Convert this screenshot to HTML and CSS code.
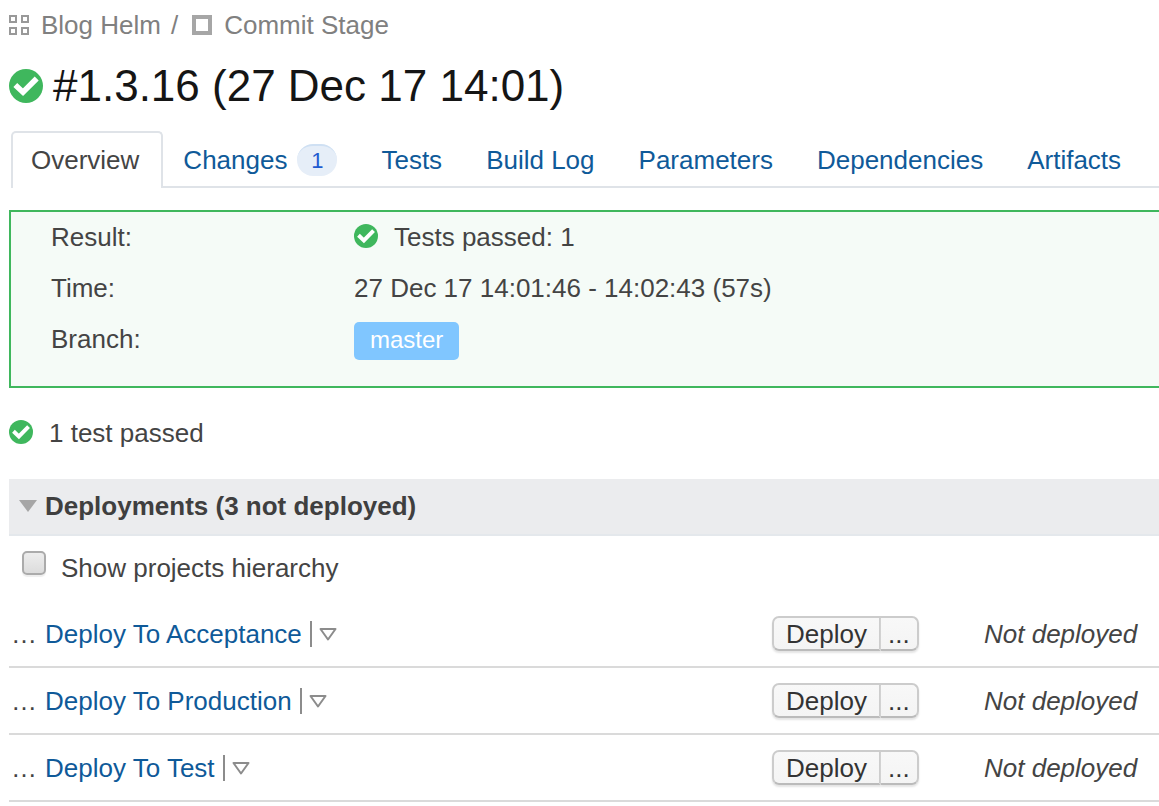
FILE: index.html
```html
<!DOCTYPE html>
<html lang="en">
<head>
    <meta charset="UTF-8">
    <meta name="viewport" content="width=device-width, initial-scale=1.0">
    <title>Blog Helm / Commit Stage #1.3.16</title>
    <link rel="stylesheet" href="styles.css">
</head>
<body>
    <!-- icons shared by the page -->
    <svg class="sprite" aria-hidden="true">
        <symbol id="icon-success" viewBox="0 0 34 34">
            <circle cx="17" cy="17" r="17" fill="#3fb75d"/>
            <path d="M6.300 16 L14 23.200 L27.700 9.500" fill="none" stroke="#fff" stroke-width="5.600"/>
        </symbol>
        <symbol id="icon-menu" viewBox="0 0 18 14">
            <path d="M1.500 2 H16.500 L9 12.500 Z" fill="none" stroke="#8c8c8c" stroke-width="2" stroke-linejoin="round"/>
        </symbol>
    </svg>

    <nav class="breadcrumbs" aria-label="Breadcrumbs">
        <svg class="crumb-icon" viewBox="0 0 20 20" fill="none" stroke="#999" stroke-width="2">
            <path d="M1 1h6v6H1z M13 1h6v6h-6z M1 13h6v6H1z M13 13h6v6h-6z"/>
        </svg>
        <a href="#">Blog Helm</a>
        <span class="separator">/</span>
        <svg class="crumb-icon" viewBox="0 0 20 20" fill="none" stroke="#a6a6a6" stroke-width="4">
            <path d="M2 2h16v16H2z"/>
        </svg>
        <a href="#">Commit Stage</a>
    </nav>

    <h1 class="build-title">
        <svg class="title-icon"><use href="#icon-success"/></svg>
        #1.3.16 (27 Dec 17 14:01)
    </h1>

    <nav class="tabs" aria-label="Build">
        <a class="tab active" href="#">Overview</a>
        <a class="tab" href="#">Changes <span class="badge">1</span></a>
        <a class="tab" href="#">Tests</a>
        <a class="tab" href="#">Build Log</a>
        <a class="tab" href="#">Parameters</a>
        <a class="tab" href="#">Dependencies</a>
        <a class="tab" href="#">Artifacts</a>
    </nav>

    <dl class="summary">
        <dt>Result:</dt>
        <dd class="with-icon"><svg class="status-icon"><use href="#icon-success"/></svg>Tests passed: 1</dd>
        <dt>Time:</dt>
        <dd>27 Dec 17 14:01:46 - 14:02:43 (57s)</dd>
        <dt>Branch:</dt>
        <dd><span class="branch">master</span></dd>
    </dl>

    <p class="tests with-icon"><svg class="status-icon"><use href="#icon-success"/></svg>1 test passed</p>

    <h2 class="section-title">
        <svg class="toggle" viewBox="0 0 18 12"><path d="M0 0h18l-9 12z" fill="#a6a6a6"/></svg>
        Deployments (3 not deployed)
    </h2>

    <div class="hierarchy">
        <input type="checkbox" id="showHierarchy">
        <label for="showHierarchy">Show projects hierarchy</label>
    </div>

    <table class="deployments">
        <tbody>
            <tr>
                <td>
                    <div class="project">
                        <span class="dots">…</span>
                        <a href="#">Deploy To Acceptance</a>
                        <button class="menu" aria-label="Acceptance menu"><svg><use href="#icon-menu"/></svg></button>
                    </div>
                </td>
                <td class="actions">
                    <div class="btn-group"><button>Deploy</button><button class="more">...</button></div>
                </td>
                <td class="status">Not deployed</td>
            </tr>
            <tr>
                <td>
                    <div class="project">
                        <span class="dots">…</span>
                        <a href="#">Deploy To Production</a>
                        <button class="menu" aria-label="Production menu"><svg><use href="#icon-menu"/></svg></button>
                    </div>
                </td>
                <td class="actions">
                    <div class="btn-group"><button>Deploy</button><button class="more">...</button></div>
                </td>
                <td class="status">Not deployed</td>
            </tr>
            <tr>
                <td>
                    <div class="project">
                        <span class="dots">…</span>
                        <a href="#">Deploy To Test</a>
                        <button class="menu" aria-label="Test menu"><svg><use href="#icon-menu"/></svg></button>
                    </div>
                </td>
                <td class="actions">
                    <div class="btn-group"><button>Deploy</button><button class="more">...</button></div>
                </td>
                <td class="status">Not deployed</td>
            </tr>
        </tbody>
    </table>
</body>
</html>
```
FILE: styles.css
```css
* {
    box-sizing: border-box;
}

body {
    margin: 0;
    padding: 10px 0 0 9px;
    background-color: #fff;
    color: #444;
    font-family: "Liberation Sans", Arial, sans-serif;
    font-size: 26px;
    line-height: 30px;
}

a {
    color: #0f5a99;
    text-decoration: none;
}

a:hover {
    text-decoration: underline;
}

button {
    font: inherit;
    cursor: pointer;
}

.sprite {
    display: none;
}

/* Breadcrumbs and title */
.breadcrumbs {
    display: flex;
    align-items: center;
    color: #808080;
}

.breadcrumbs a {
    color: #808080;
}

.crumb-icon {
    width: 20px;
    height: 20px;
    margin-right: 12px;
}

.separator {
    margin: 0 14px 0 10px;
}

.build-title {
    display: flex;
    align-items: center;
    gap: 10px;
    margin: 21px 0 20px;
    color: #151515;
    font-size: 44px;
    font-weight: normal;
    line-height: 50px;
}

.title-icon {
    width: 34px;
    height: 34px;
}

/* Tabs */
.tabs {
    display: flex;
    margin-left: 2px;
}

.tab {
    display: flex;
    align-items: center;
    padding: 14px 24px 11px 20px;
    border-bottom: 2px solid #dfe3e8;
}

.tab:last-child {
    flex-grow: 1;
}

.tab.active {
    padding: 12px 22px 13px 18px;
    border: 2px solid #dfe3e8;
    border-bottom: none;
    border-radius: 5px 5px 0 0;
    color: #444;
}

.badge {
    width: 40px;
    height: 32px;
    margin: -1px 0 -1px 10px;
    border-top: 2px solid #cfe0f3;
    border-radius: 16px;
    background-color: #e6eef8;
    color: #1f5bd0;
    font-size: 22px;
    text-align: center;
}

/* Build summary */
.summary {
    display: grid;
    grid-template-columns: 303px 1fr;
    row-gap: 21px;
    margin: 22px 0 0;
    padding: 10px 0 26px 40px;
    border: 2px solid #3fb75d;
    border-right: none;
    background-color: #f5fbf7;
}

.summary dd {
    margin: 0;
}

.with-icon {
    display: flex;
    align-items: center;
    gap: 16px;
}

.status-icon {
    width: 24px;
    height: 24px;
    margin-bottom: 2px;
}

.branch {
    display: inline-block;
    margin-top: -2px;
    padding: 3px 16px 5px;
    border-radius: 5px;
    background-color: #80c6ff;
    color: #fff;
    font-size: 24px;
}

.tests {
    margin: 30px 0 31px;
}

/* Deployments */
.section-title {
    display: flex;
    align-items: center;
    gap: 8px;
    margin: 0;
    padding: 12px 10px 13px;
    border-bottom: 2px solid #e4e8ec;
    background-color: #ebecee;
    color: #3f3f3f;
    font-size: 26px;
}

.toggle {
    width: 18px;
    height: 12px;
}

.hierarchy {
    display: flex;
    align-items: flex-start;
    gap: 15px;
    padding: 15px 13px 18px;
}

.hierarchy label {
    margin-top: 2px;
}

.hierarchy input {
    appearance: none;
    width: 24px;
    height: 24px;
    margin: 0;
    border: 2px solid #ababab;
    border-radius: 5px;
    background: linear-gradient(#ededed, #dcdcdc);
    box-shadow: 0 2px 1px #eee;
}

.hierarchy input:checked {
    background: #8c8c8c;
}

.deployments {
    width: 100%;
    border-spacing: 0;
}

.deployments td {
    height: 67px;
    padding: 0;
    border-bottom: 2px solid #dadada;
}

.project {
    display: flex;
    align-items: center;
    padding-left: 2px;
}

.dots {
    margin-right: 8px;
}

.menu {
    display: flex;
    align-items: center;
    height: 26px;
    margin-left: 8px;
    padding: 0 0 0 7px;
    border: none;
    border-left: 2px solid #8c8c8c;
    background: none;
}

.menu svg {
    width: 18px;
    height: 14px;
}

.deployments .actions {
    width: 212px;
}

.deployments .status {
    width: 175px;
    font-style: italic;
}

.btn-group {
    display: flex;
}

.btn-group button {
    height: 35px;
    padding: 0 12px;
    border: 2px solid #ccc;
    border-bottom-color: #bbb;
    border-radius: 7px 0 0 7px;
    background: linear-gradient(#f8f8f8, #f4f4f4);
    box-shadow: 0 2px 2px #e4e4e4;
    color: #333;
    line-height: 30px;
}

.btn-group .more {
    padding: 0 7px;
    border-left: none;
    border-radius: 0 7px 7px 0;
}
```
